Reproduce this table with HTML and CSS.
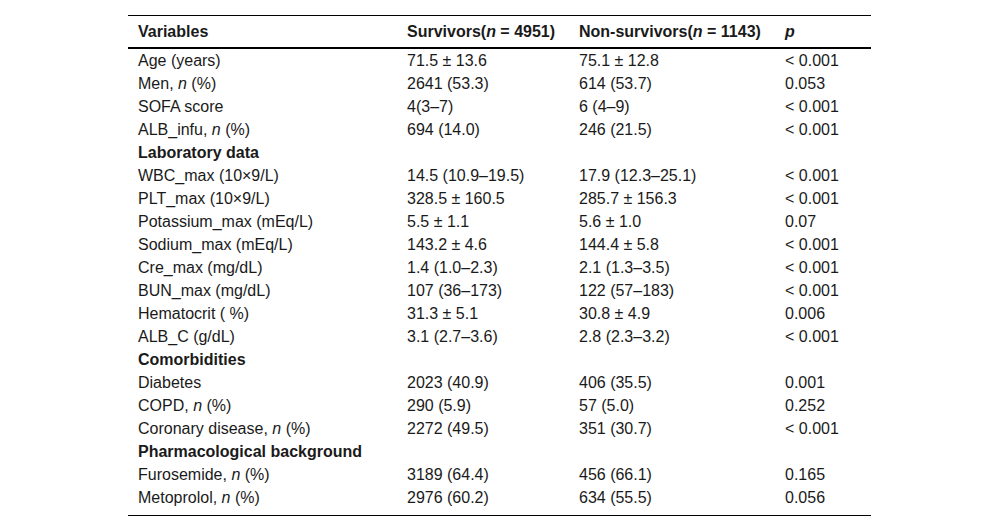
FILE: index.html
```html
<!DOCTYPE html>
<html>
<head>
<meta charset="utf-8">
<link rel="stylesheet" href="styles.css">
</head>
<body>
<table class="data">
  <colgroup>
    <col class="c1"><col class="c2"><col class="c3"><col class="c4">
  </colgroup>
  <thead>
    <tr><th>Variables</th><th>Survivors(<i>n</i> = 4951)</th><th>Non-survivors(<i>n</i> = 1143)</th><th><i>p</i></th></tr>
  </thead>
  <tbody>
    <tr><td>Age (years)</td><td>71.5 ± 13.6</td><td>75.1 ± 12.8</td><td>&lt; 0.001</td></tr>
    <tr><td>Men, <i>n</i> (%)</td><td>2641 (53.3)</td><td>614 (53.7)</td><td>0.053</td></tr>
    <tr><td>SOFA score</td><td>4(3–7)</td><td>6 (4–9)</td><td>&lt; 0.001</td></tr>
    <tr><td>ALB_infu, <i>n</i> (%)</td><td>694 (14.0)</td><td>246 (21.5)</td><td>&lt; 0.001</td></tr>
    <tr class="sect"><td>Laboratory data</td><td></td><td></td><td></td></tr>
    <tr><td>WBC_max (10×9/L)</td><td>14.5 (10.9–19.5)</td><td>17.9 (12.3–25.1)</td><td>&lt; 0.001</td></tr>
    <tr><td>PLT_max (10×9/L)</td><td>328.5 ± 160.5</td><td>285.7 ± 156.3</td><td>&lt; 0.001</td></tr>
    <tr><td>Potassium_max (mEq/L)</td><td>5.5 ± 1.1</td><td>5.6 ± 1.0</td><td>0.07</td></tr>
    <tr><td>Sodium_max (mEq/L)</td><td>143.2 ± 4.6</td><td>144.4 ± 5.8</td><td>&lt; 0.001</td></tr>
    <tr><td>Cre_max (mg/dL)</td><td>1.4 (1.0–2.3)</td><td>2.1 (1.3–3.5)</td><td>&lt; 0.001</td></tr>
    <tr><td>BUN_max (mg/dL)</td><td>107 (36–173)</td><td>122 (57–183)</td><td>&lt; 0.001</td></tr>
    <tr><td>Hematocrit ( %)</td><td>31.3 ± 5.1</td><td>30.8 ± 4.9</td><td>0.006</td></tr>
    <tr><td>ALB_C (g/dL)</td><td>3.1 (2.7–3.6)</td><td>2.8 (2.3–3.2)</td><td>&lt; 0.001</td></tr>
    <tr class="sect"><td>Comorbidities</td><td></td><td></td><td></td></tr>
    <tr><td>Diabetes</td><td>2023 (40.9)</td><td>406 (35.5)</td><td>0.001</td></tr>
    <tr><td>COPD, <i>n</i> (%)</td><td>290 (5.9)</td><td>57 (5.0)</td><td>0.252</td></tr>
    <tr><td>Coronary disease, <i>n</i> (%)</td><td>2272 (49.5)</td><td>351 (30.7)</td><td>&lt; 0.001</td></tr>
    <tr class="sect"><td>Pharmacological background</td><td></td><td></td><td></td></tr>
    <tr><td>Furosemide, <i>n</i> (%)</td><td>3189 (64.4)</td><td>456 (66.1)</td><td>0.165</td></tr>
    <tr class="last"><td>Metoprolol, <i>n</i> (%)</td><td>2976 (60.2)</td><td>634 (55.5)</td><td>0.056</td></tr>
  </tbody>
</table>
</body>
</html>
```
FILE: styles.css
```css
html, body {
  margin: 0;
  padding: 0;
  background: #fff;
}
body {
  padding: 15px 0 0 128px;
  font-family: "Liberation Sans", Arial, sans-serif;
  font-size: 16px;
  color: #1a1a1a;
}
.data {
  border-collapse: collapse;
  width: 743px;
  table-layout: fixed;
  border-top: 1px solid #000;
  border-bottom: 1px solid #000;
}
.c1 { width: 269px; }
.c2 { width: 172px; }
.c3 { width: 206px; }
.c4 { width: 96px; }
.data th {
  text-align: left;
  font-weight: bold;
  height: 31px;
  padding: 0 10px;
  line-height: 31px;
  border-bottom: 2px solid #000;
  white-space: nowrap;
}
.data td {
  padding: 0 10px;
  height: 23px;
  line-height: 23px;
  white-space: nowrap;
}
.data .sect td {
  font-weight: bold;
}
.data .last td {
  height: 29px;
  line-height: 23px;
  vertical-align: top;
}
```
